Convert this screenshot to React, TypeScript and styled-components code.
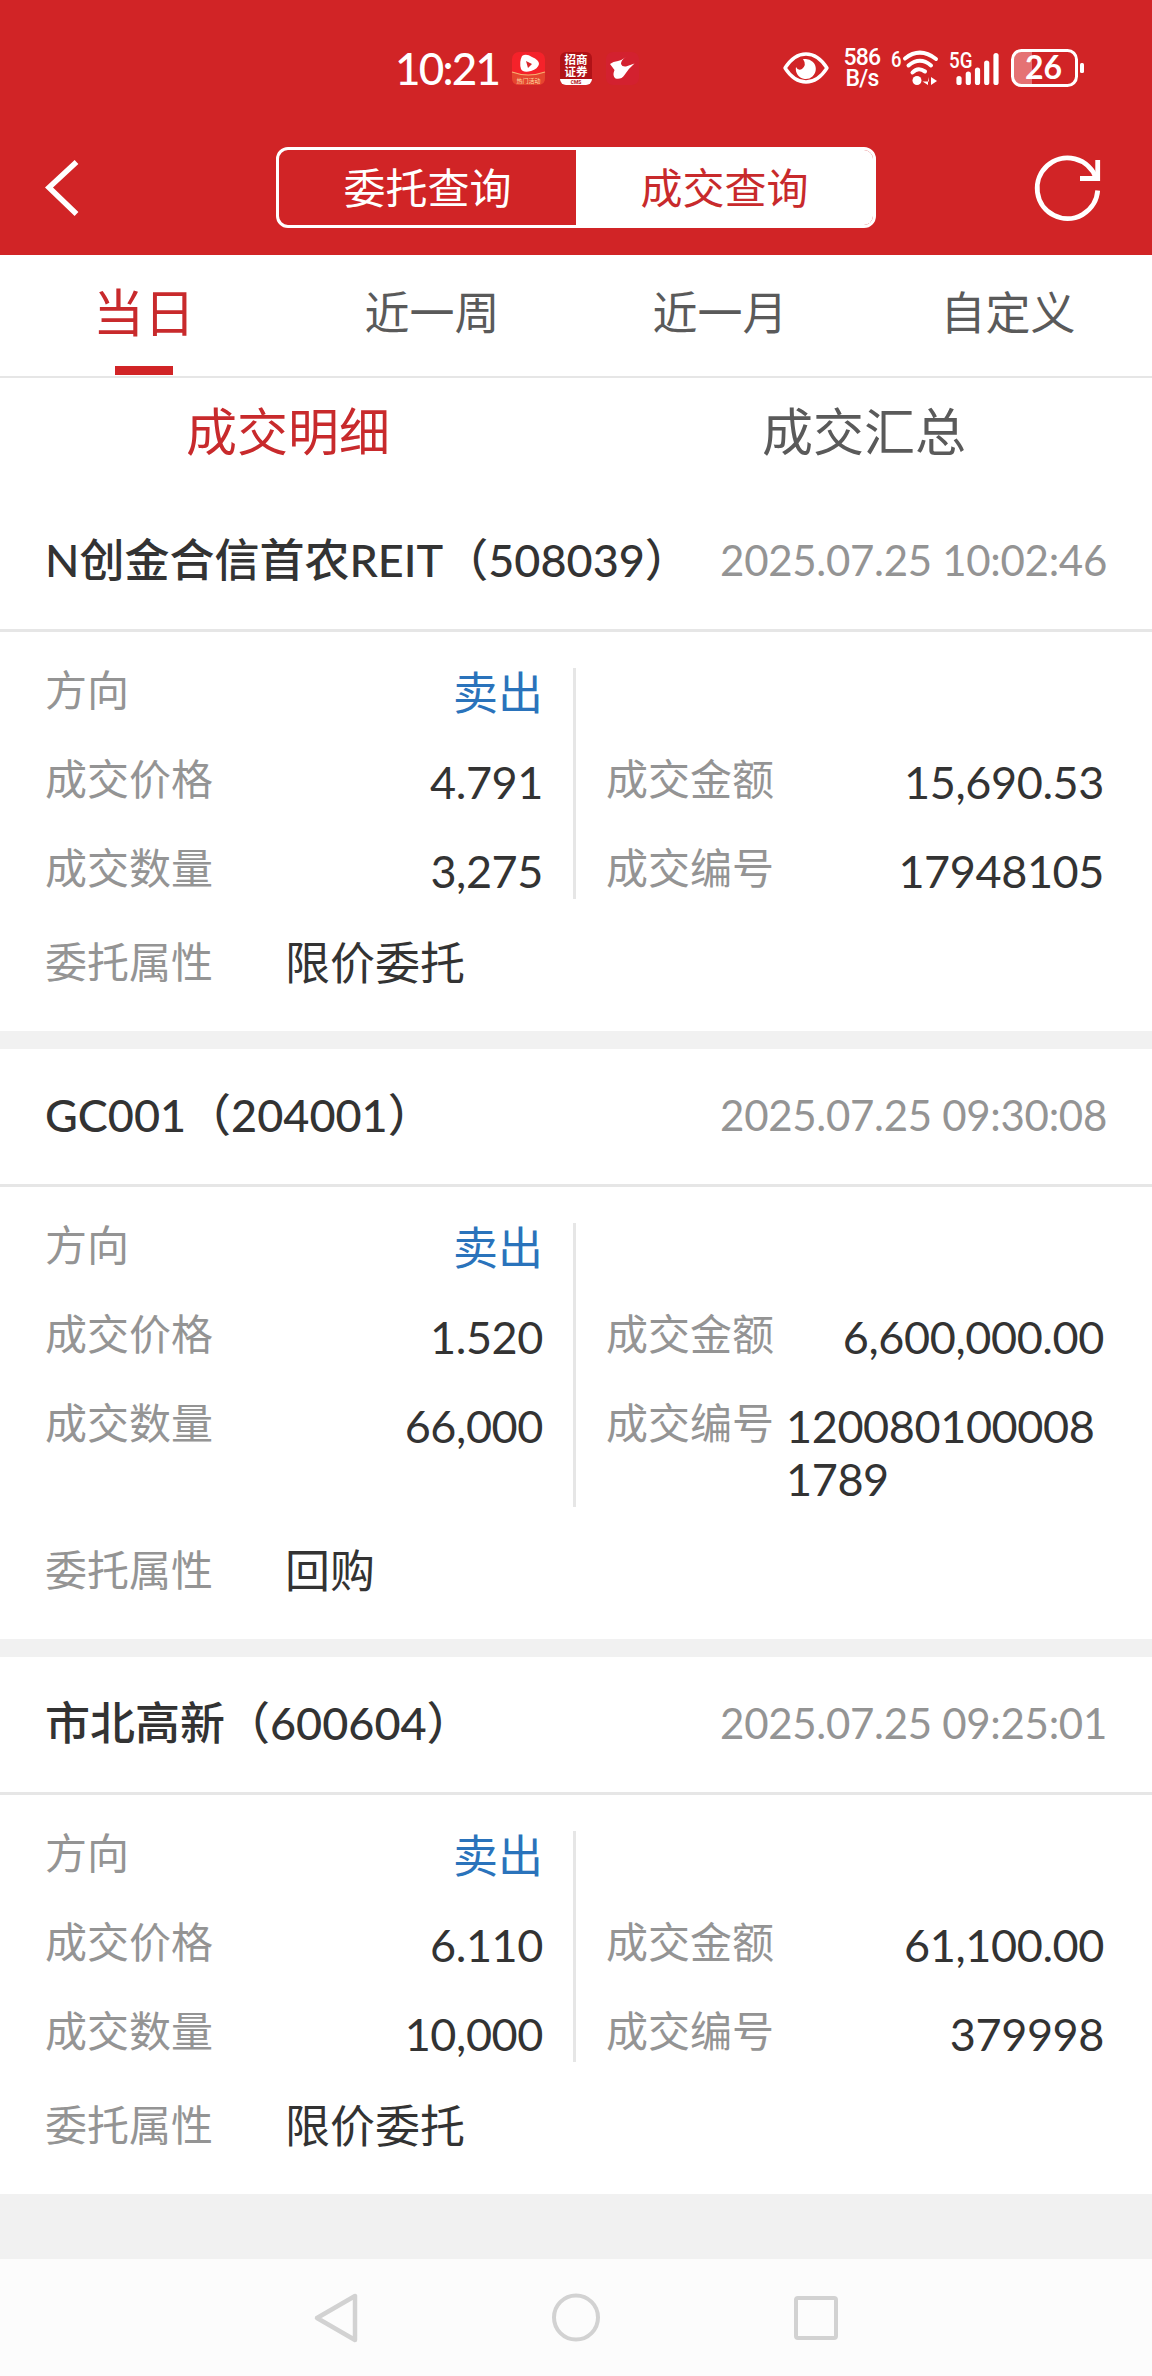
import React from 'react';
import styled, { createGlobalStyle } from 'styled-components';

const RED = '#d12426';
const RED_TEXT = '#c82a2c';

const Global = createGlobalStyle`
  * { box-sizing: border-box; }
  body {
    margin: 0;
    background: #f1f1f1;
    font-family: Lato, "Noto Sans CJK SC", sans-serif;
    color: #333;
  }
`;

const Screen = styled.div`
  width: 1152px;
  height: 2376px;
  display: flex;
  flex-direction: column;
  background: #f1f1f1;
  overflow: hidden;
`;

const Header = styled.header`
  height: 255px;
  flex: none;
  background: ${RED};
  color: #fff;
  display: flex;
  flex-direction: column;
`;

const StatusBar = styled.div`
  height: 120px;
  padding: 16px 67px 0 395px;
  display: flex;
  align-items: center;
  justify-content: space-between;
`;

const StatusGroup = styled.div`
  display: flex;
  align-items: center;
`;

const Clock = styled.span`
  width: 117px;
  font-size: 44px;
  font-weight: 500;
  line-height: 50px;
  letter-spacing: -1.8px;
  white-space: nowrap;
`;

const Glyph = styled.svg<{ $gap?: number }>`
  display: block;
  flex: none;
  overflow: visible;
  margin-left: ${(p) => p.$gap ?? 0}px;
`;

const NetSpeed = styled.div`
  width: 38px;
  margin: 0 0 0 14px;
  font-family: Roboto, sans-serif;
  font-size: 23px;
  font-weight: 500;
  line-height: 21px;
  text-align: center;
  letter-spacing: -0.8px;
`;

const TitleBar = styled.div`
  height: 135px;
  padding: 0 50px 0 44px;
  display: flex;
  align-items: center;
  justify-content: space-between;
`;

const Segments = styled.div`
  width: 600px;
  height: 81px;
  margin-left: 38px;
  display: flex;
  border: 3px solid #fff;
  border-radius: 12px;
  overflow: hidden;
`;

const Segment = styled.button<{ $active?: boolean }>`
  flex: 1;
  border: 0;
  padding: 0;
  font-family: inherit;
  font-size: 42px;
  line-height: 60px;
  background: ${(p) => (p.$active ? '#fff' : 'transparent')};
  color: ${(p) => (p.$active ? RED_TEXT : '#fff')};
`;

const Tabs = styled.nav`
  height: 123px;
  flex: none;
  display: flex;
  background: #fff;
  border-bottom: 2px solid #e6e6e6;
`;

const Tab = styled.div<{ $active?: boolean }>`
  flex: 1;
  padding-top: 20px;
  display: flex;
  flex-direction: column;
  align-items: center;
  justify-content: space-between;
  font-size: ${(p) => (p.$active ? 51 : 45)}px;
  line-height: 76px;
  color: ${(p) => (p.$active ? RED_TEXT : '#5a5a5a')};

  &::after {
    content: '';
    width: 58px;
    height: 9px;
    margin-bottom: 1px;
    background: ${(p) => (p.$active ? RED : 'transparent')};
  }
`;

const SubTabs = styled.div`
  height: 116px;
  flex: none;
  display: flex;
  background: #fff;
`;

const SubTab = styled.div<{ $active?: boolean }>`
  flex: 1;
  text-align: center;
  font-size: 51px;
  line-height: 107px;
  color: ${(p) => (p.$active ? RED_TEXT : '#5a5a5a')};
`;

const Trades = styled.main`
  flex: 1;
  display: flex;
  flex-direction: column;
  gap: 18px;
`;

const Card = styled.article`
  background: #fff;
`;

const CardHeader = styled.div`
  height: 138px;
  padding: 0 45px 4px;
  display: flex;
  align-items: center;
  justify-content: space-between;
  border-bottom: 3px solid #e6e6e6;
`;

const Name = styled.h2`
  margin: 0;
  font-size: 45px;
  font-weight: 500;
  line-height: 60px;
  white-space: nowrap;
`;

const Time = styled.time`
  font-size: 42px;
  line-height: 60px;
  letter-spacing: -0.3px;
  color: #949494;
  white-space: nowrap;
`;

const CardBody = styled.div`
  padding: 36px 48px 42px 45px;
`;

const Columns = styled.div`
  display: grid;
  grid-template-columns: 531px 528px;
`;

const Column = styled.div<{ $divided?: boolean }>`
  display: flex;
  flex-direction: column;
  justify-content: flex-start;
  gap: 36px;
  ${(p) => (p.$divided ? 'padding-right: 30px; border-right: 3px solid #e6e6e6;' : 'padding-left: 30px;')}
`;

const Field = styled.div`
  min-height: 53px;
  display: flex;
  align-items: flex-start;
  justify-content: space-between;
`;

const Label = styled.span`
  flex: none;
  font-size: 42px;
  line-height: 44px;
  color: #949494;
`;

const Value = styled.span<{ $sell?: boolean }>`
  max-width: 318px;
  margin: -1px 0 1px;
  font-size: 45px;
  line-height: 53px;
  letter-spacing: ${(p) => (p.$sell ? 0 : -0.4)}px;
  overflow-wrap: anywhere;
  color: ${(p) => (p.$sell ? '#2a73bb' : '#333')};
`;

const Attribute = styled.div`
  margin-top: 37px;
  height: 53px;
  display: flex;
  align-items: center;
`;

const AttributeLabel = styled(Label)`
  width: 240px;
  line-height: 53px;
`;

const AttributeValue = styled(Value)`
  margin: 2px 0 0;
  letter-spacing: 0;
`;

const NavBar = styled.footer`
  height: 117px;
  flex: none;
  padding: 0 312px;
  display: flex;
  align-items: center;
  justify-content: space-between;
  background: #fcfcfc;
`;

interface Trade {
  name: string;
  time: string;
  price: string;
  quantity: string;
  amount: string;
  id: string;
  attribute: string;
}

const trades: Trade[] = [
  { name: 'N创金合信首农REIT（508039）', time: '2025.07.25 10:02:46', price: '4.791', quantity: '3,275', amount: '15,690.53', id: '17948105', attribute: '限价委托' },
  { name: 'GC001（204001）', time: '2025.07.25 09:30:08', price: '1.520', quantity: '66,000', amount: '6,600,000.00', id: '1200801000081789', attribute: '回购' },
  { name: '市北高新（600604）', time: '2025.07.25 09:25:01', price: '6.110', quantity: '10,000', amount: '61,100.00', id: '379998', attribute: '限价委托' },
];

const VideoAppIcon = () => (
  <Glyph width="33" height="33" viewBox="0 0 33 33">
    <rect width="33" height="33" rx="7" fill="#f5222a" />
    <path d="M0 20Q16 26 33 20V26Q33 33 26 33H7Q0 33 0 26Z" fill="#e5452f" />
    <path d="M0 20Q16 26 33 20" fill="none" stroke="#f6b070" strokeWidth="1.2" />
    <path d="M10 4Q14 1 20 5Q27 8 27 12Q26 17 19 19Q11 21 9 17Q7 10 10 4Z" fill="#fff" />
    <path d="M14 9L20 12L16 16Z" fill="#d8262b" />
    <text x="16.5" y="31" fontSize="6" textAnchor="middle" fill="#ffd9a0" fontFamily="Noto Sans CJK SC">热门活动</text>
  </Glyph>
);

const BrokerAppIcon = () => (
  <Glyph width="32" height="33" viewBox="0 0 32 33" $gap={15}>
    <defs>
      <clipPath id="broker"><rect width="32" height="33" rx="6" /></clipPath>
    </defs>
    <g clipPath="url(#broker)">
      <rect width="32" height="33" fill="#b01217" />
      <rect y="27" width="32" height="6" fill="#fff" />
      <g fill="#fff" fontSize="11.500" fontWeight="700" textAnchor="middle" fontFamily="Noto Sans CJK SC">
        <text x="16" y="12">招商</text>
        <text x="16" y="24">证券</text>
      </g>
      <text x="16" y="32" fontSize="5" fontWeight="700" textAnchor="middle" fill="#b01217" fontFamily="Roboto">CMS</text>
    </g>
  </Glyph>
);

const BirdAppIcon = () => (
  <Glyph width="33" height="33" viewBox="0 0 33 33" $gap={14}>
    <rect width="33" height="33" rx="7" fill="#d3212f" />
    <path d="M20 5Q15 8 15 12Q16 15 20 14.500L28.500 11.500Q22 17 18.500 23Q15 28 9.500 26.500Q6 24 8.500 18L4 12Q7 9.500 12 9Q16 8 20 5Z" fill="#fff" />
  </Glyph>
);

const EyeIcon = () => (
  <Glyph width="46" height="32" viewBox="0 0 46 32">
    <path d="M2 16Q11 2 23 2T44 16Q35 30 23 30T2 16Z" fill="none" stroke="#fff" strokeWidth="3.400" strokeLinejoin="round" />
    <path d="M22 7A10 10 0 1 1 13 15Q15 19 19 17Q24 13 20 7Z" fill="#fff" />
  </Glyph>
);

const WifiIcon = () => (
  <Glyph width="49" height="38" viewBox="0 0 49 38" $gap={10}>
    <text x="0" y="17.500" fontSize="22" fontWeight="500" fill="#fff" fontFamily="Roboto" textLength="10.500" lengthAdjust="spacingAndGlyphs">6</text>
    <g fill="none" stroke="#fff" strokeWidth="4" strokeLinecap="round">
      <path d="M14 9.500Q29 -2.500 45 10" />
      <path d="M17.500 16.500Q29 7 40 16.500" />
      <path d="M21.500 23.500Q27 17.500 34 22.500" />
    </g>
    <circle cx="26" cy="31.500" r="4.500" fill="#fff" />
    <path d="M37 28V36L31.500 32.500H38ZM40 28L46 32L40 36Z" fill="#fff" />
  </Glyph>
);

const SignalIcon = () => (
  <Glyph width="51" height="38" viewBox="0 0 51 38" $gap={9}>
    <text x="0" y="18.500" fontSize="22" fontWeight="500" fill="#fff" fontFamily="Roboto" textLength="23.500" lengthAdjust="spacingAndGlyphs">5G</text>
    <g stroke="#fff" strokeWidth="5.200" strokeLinecap="round">
      <path d="M10 29.500V33.500" />
      <path d="M19.300 25V33.500" />
      <path d="M28.500 21V33.500" />
      <path d="M37.700 14V33.500" />
      <path d="M47 6.500V33.500" />
    </g>
  </Glyph>
);

const BatteryIcon = () => (
  <Glyph width="74" height="38" viewBox="0 0 74 38" $gap={11}>
    <path d="M10 2H21V36H10Q2 36 2 28V10Q2 2 10 2Z" fill="#e57274" />
    <rect x="1.500" y="1.500" width="64" height="35" rx="9" fill="none" stroke="#fff" strokeWidth="3" />
    <rect x="69" y="14" width="4" height="10" rx="1.500" fill="#fff" />
    <text x="32.500" y="30" fontSize="32" fontWeight="700" textAnchor="middle" fill="#fff" fontFamily="Lato">26</text>
  </Glyph>
);

const BackIcon = () => (
  <Glyph width="36" height="60" viewBox="0 0 36 60">
    <path d="M32.500 4L5 29.500L32.500 56" fill="none" stroke="#fff" strokeWidth="5.500" strokeLinecap="butt" />
  </Glyph>
);

const RefreshIcon = () => (
  <Glyph width="68" height="68" viewBox="0 0 68 68">
    <g fill="none" stroke="#fff" strokeWidth="4.800">
      <path d="M63.700 36.500A30.300 30.300 0 1 1 62 24" />
      <path d="M63.700 6V24.500H46" />
    </g>
  </Glyph>
);

const App = () => (
  <>
    <Global />
    <Screen>
      <Header>
        <StatusBar>
          <StatusGroup>
            <Clock>10:21</Clock>
            <VideoAppIcon />
            <BrokerAppIcon />
            <BirdAppIcon />
          </StatusGroup>
          <StatusGroup>
            <EyeIcon />
            <NetSpeed>586<br />B/s</NetSpeed>
            <WifiIcon />
            <SignalIcon />
            <BatteryIcon />
          </StatusGroup>
        </StatusBar>
        <TitleBar>
          <BackIcon />
          <Segments>
            <Segment>委托查询</Segment>
            <Segment $active>成交查询</Segment>
          </Segments>
          <RefreshIcon />
        </TitleBar>
      </Header>
      <Tabs>
        <Tab $active>当日</Tab>
        <Tab>近一周</Tab>
        <Tab>近一月</Tab>
        <Tab>自定义</Tab>
      </Tabs>
      <SubTabs>
        <SubTab $active>成交明细</SubTab>
        <SubTab>成交汇总</SubTab>
      </SubTabs>
      <Trades>
        {trades.map((t) => (
          <Card key={t.id}>
            <CardHeader>
              <Name>{t.name}</Name>
              <Time>{t.time}</Time>
            </CardHeader>
            <CardBody>
              <Columns>
                <Column $divided>
                  <Field><Label>方向</Label><Value $sell>卖出</Value></Field>
                  <Field><Label>成交价格</Label><Value>{t.price}</Value></Field>
                  <Field><Label>成交数量</Label><Value>{t.quantity}</Value></Field>
                </Column>
                <Column>
                  <Field />
                  <Field><Label>成交金额</Label><Value>{t.amount}</Value></Field>
                  <Field><Label>成交编号</Label><Value>{t.id}</Value></Field>
                </Column>
              </Columns>
              <Attribute>
                <AttributeLabel>委托属性</AttributeLabel>
                <AttributeValue>{t.attribute}</AttributeValue>
              </Attribute>
            </CardBody>
          </Card>
        ))}
      </Trades>
      <NavBar>
        <Glyph width="48" height="52" viewBox="0 0 48 52">
          <path d="M43 4V48L5 26Z" fill="none" stroke="#d2d2d2" strokeWidth="4.500" strokeLinejoin="round" />
        </Glyph>
        <Glyph width="48" height="48" viewBox="0 0 48 48">
          <circle cx="24" cy="23.500" r="22" fill="none" stroke="#d2d2d2" strokeWidth="4" />
        </Glyph>
        <Glyph width="48" height="48" viewBox="0 0 48 48">
          <rect x="4" y="4" width="40" height="40" rx="2" fill="none" stroke="#d2d2d2" strokeWidth="4" />
        </Glyph>
      </NavBar>
    </Screen>
  </>
);

export default App;
